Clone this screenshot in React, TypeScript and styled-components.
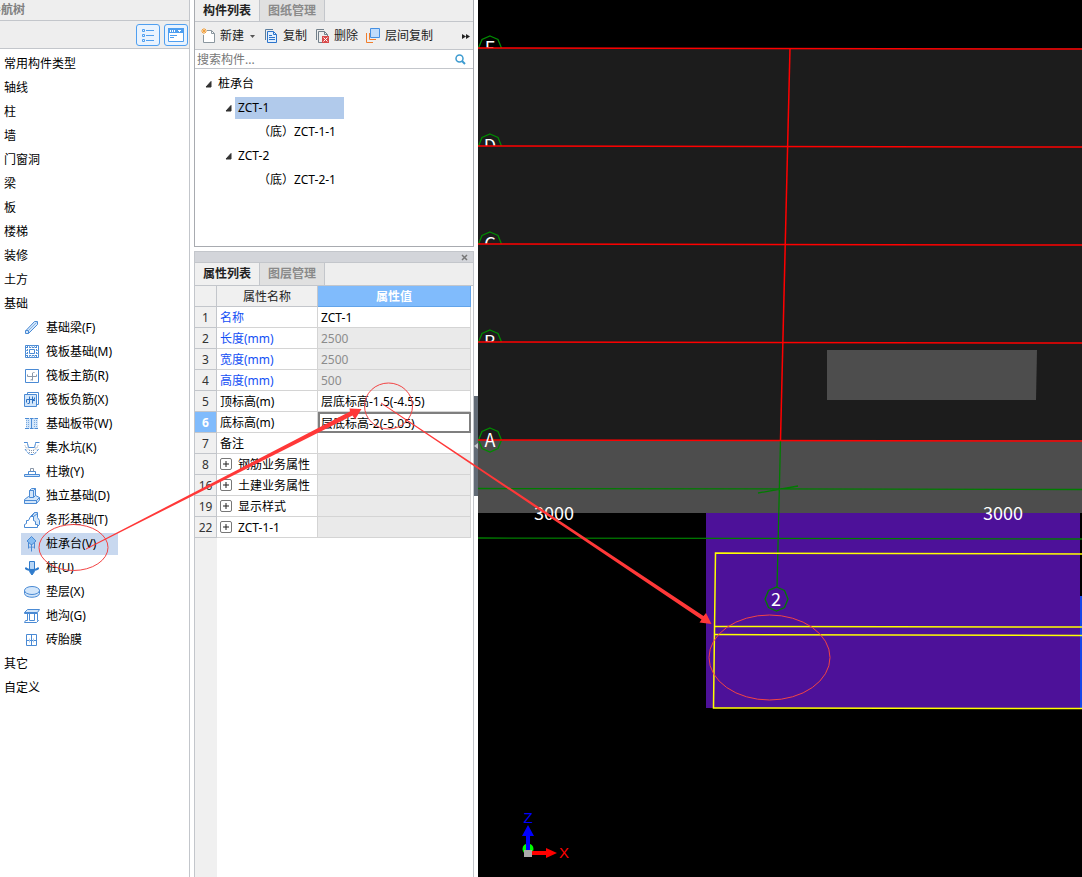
import React from "react";
import styled, { createGlobalStyle } from "styled-components";

const Global = createGlobalStyle`
  *, *::before, *::after { box-sizing: border-box; }
  body { margin: 0; background: #fff; }
  body, button, input, table {
    font-family: "Noto Sans", "Noto Sans CJK SC", sans-serif;
    font-size: 12px;
    line-height: 20px;
    color: #000;
  }
  button { border: 0; padding: 0; background: none; cursor: pointer; }
  svg { display: block; flex: none; }
`;

const line = "#c3c6cb";
const bar = "#eeeeee";

const Shell = styled.div`
  position: relative;
  display: flex;
  min-height: 100vh;
  overflow: hidden;
`;

/* ---------- navigation ---------- */
const Nav = styled.nav`
  width: 190px;
  flex: none;
  margin-right: 4px;
  border-right: 1px solid ${line};
`;
const NavTitle = styled.div`
  display: flex;
  justify-content: flex-end;
  width: 100%;
  height: 21px;
  padding-right: 164px;
  overflow: hidden;
  white-space: nowrap;
  background: ${bar};
  border-bottom: 1px solid ${line};
  color: #808080;
  font-weight: 700;
`;
const NavTools = styled.div`
  display: flex;
  justify-content: flex-end;
  align-items: center;
  gap: 4px;
  height: 28px;
  padding-right: 1px;
  background: ${bar};
  border-bottom: 1px solid ${line};
`;
const ViewButton = styled.button`
  display: grid;
  place-items: center;
  width: 24px;
  height: 22px;
  border: 1px solid #4f9ff0;
  border-radius: 3px;
  background: #e9f3fe;
`;
const NavList = styled.ul`
  list-style: none;
  margin: 0;
  padding: 3px 0;
`;
const NavItem = styled.li`
  display: flex;
  align-items: center;
  height: 24px;
`;
const NavButton = styled.button<{ $child?: boolean; $active?: boolean }>`
  display: flex;
  align-items: center;
  gap: 6px;
  height: 22px;
  min-width: ${(p) => (p.$child ? "97px" : "0")};
  margin-left: ${(p) => (p.$child ? "21px" : "4px")};
  padding-left: ${(p) => (p.$child ? "3px" : "0")};
  white-space: nowrap;
  background: ${(p) => (p.$active ? "#c8d8ef" : "transparent")};
`;

/* ---------- middle column ---------- */
const Middle = styled.div`
  display: flex;
  flex-direction: column;
  width: 280px;
  flex: none;
  gap: 4px;
`;
const Panel = styled.section<{ $grow?: boolean }>`
  display: flex;
  flex-direction: column;
  flex: ${(p) => (p.$grow ? "1" : "none")};
  height: ${(p) => (p.$grow ? "auto" : "247px")};
  border: 1px solid ${(p) => (p.$grow ? line : "#a8abb0")};
  border-top: 0;
  border-bottom-width: ${(p) => (p.$grow ? "0" : "1px")};
`;
const Tabs = styled.div<{ $tall?: boolean }>`
  display: flex;
  height: ${(p) => (p.$tall ? "23px" : "22px")};
  flex: none;
  background: ${bar};
  border-bottom: 1px solid ${line};
`;
const Tab = styled.button<{ $active?: boolean }>`
  width: 65px;
  border-right: 1px solid ${line};
  background: ${(p) => (p.$active ? "#f0f0f0" : "#e0e0e0")};
  color: ${(p) => (p.$active ? "#222" : "#8a8a8a")};
  font-weight: 700;
`;
const Toolbar = styled.div`
  display: flex;
  align-items: center;
  gap: 8px;
  height: 28px;
  padding: 1px 2px 0 6px;
  background: ${bar};
  border-bottom: 1px solid ${line};
`;
const ToolButton = styled.button`
  display: flex;
  align-items: center;
  gap: 4px;
  white-space: nowrap;
  color: #1c1c1c;
`;
const MoreButton = styled.button`
  margin-left: auto;
`;
const SearchBox = styled.label`
  display: flex;
  align-items: center;
  height: 19px;
  padding: 1px 7px 0 2px;
  border-bottom: 1px solid ${line};
`;
const SearchInput = styled.input`
  flex: 1;
  min-width: 0;
  height: 18px;
  padding: 0;
  border: 0;
  outline: 0;
  background: transparent;
  &::placeholder { color: #777; opacity: 1; }
`;
const Tree = styled.ul`
  list-style: none;
  margin: 0;
  padding: 3px 0;
`;
const TreeRow = styled.li<{ $level: number }>`
  display: flex;
  align-items: center;
  gap: 3px;
  height: 24px;
  padding-left: ${(p) => 10 + p.$level * 20}px;
`;
const TreeLabel = styled.button<{ $active?: boolean }>`
  height: 22px;
  min-width: ${(p) => (p.$active ? "109px" : "0")};
  padding: 0 3px;
  text-align: left;
  white-space: nowrap;
  background: ${(p) => (p.$active ? "#b1caeb" : "transparent")};
`;

const DockBar = styled.div`
  display: flex;
  justify-content: flex-end;
  align-items: center;
  height: 12px;
  padding-right: 5px;
  background: #d3d5da;
  border-top: 1px solid ${line};
  border-bottom: 1px solid ${line};
`;
const TableArea = styled.div`
  flex: 1;
  padding-right: 2px;
  background: linear-gradient(to right, #f0f0f0 22px, #fff 22px);
`;
const Table = styled.table`
  width: 100%;
  table-layout: fixed;
  border-collapse: separate;
  border-spacing: 0;
  line-height: 19px;
`;
const HeadCell = styled.th<{ $width?: string; $active?: boolean }>`
  width: ${(p) => p.$width ?? "auto"};
  height: 21px;
  padding: 1px 0 0;
  font-weight: ${(p) => (p.$active ? 700 : 400)};
  color: ${(p) => (p.$active ? "#fff" : "#222")};
  background: ${(p) => (p.$active ? "#80bbfc" : "#f0f0f0")};
  border-right: 1px solid ${(p) => (p.$active ? "#62a4ea" : line)};
  border-bottom: 1px solid ${(p) => (p.$active ? "#62a4ea" : line)};
`;
const RowNumber = styled.th<{ $active?: boolean }>`
  height: 21px;
  padding: 1px 0 0;
  text-align: center;
  font-weight: ${(p) => (p.$active ? 700 : 400)};
  color: ${(p) => (p.$active ? "#fff" : "#333")};
  background: ${(p) => (p.$active ? "#80bbfc" : "#f0f0f0")};
  border-right: 1px solid ${line};
  border-bottom: 1px solid ${line};
`;
const Cell = styled.td<{ $blue?: boolean; $shade?: boolean }>`
  height: 21px;
  padding: 1px 0 0 3px;
  white-space: nowrap;
  color: ${(p) => (p.$blue ? "#1450f5" : p.$shade ? "#8c8c8c" : "#000")};
  background: ${(p) => (p.$shade ? "#eaeaea" : "#fff")};
  border-right: 1px solid #d4d4d4;
  border-bottom: 1px solid #d4d4d4;
`;
const EditCell = styled.td`
  padding: 0;
  height: 21px;
`;
const CellInput = styled.input`
  display: block;
  width: 100%;
  height: 21px;
  padding: 0 1px;
  border: 2px solid #7f7f7f;
  outline: 0;
`;
const GroupLabel = styled.span`
  display: flex;
  align-items: center;
  gap: 6px;
  height: 19px;
`;
const Expand = styled.button`
  display: grid;
  place-items: center;
  width: 12px;
  height: 12px;
  margin-bottom: 2px;
  border: 1px solid #777;
  border-radius: 2px;
  background: #fff;
`;

/* ---------- splitter and drawing area ---------- */
const Splitter = styled.div`
  width: 4px;
  flex: none;
  padding-top: 396px;
`;
const SplitHandle = styled.button`
  display: flex;
  align-items: center;
  width: 4px;
  height: 100px;
  background: #626b76;
`;
const Viewport = styled.main`
  flex: 1;
  min-width: 0;
  background: #000;
  overflow: hidden;
`;
const Scene = styled.svg`
  width: 100%;
  height: 100%;
  font-family: "Noto Sans CJK SC", "Noto Sans", sans-serif;
  font-size: 18px;
`;
const AxisLabel = styled.text`
  font-family: "Liberation Sans", sans-serif;
  font-size: 15px;
`;
const Markup = styled.svg`
  position: absolute;
  left: 0;
  top: 0;
  width: 100%;
  height: 100%;
  pointer-events: none;
`;

/* ---------- icons ---------- */
const B = "#4a8ad4";
const L = "#d3e6fa";
const Icon = ({ children }: { children: React.ReactNode }) => (
  <svg width="16" height="16" viewBox="0 0 16 16" fill="none" stroke={B} aria-hidden="true">
    {children}
  </svg>
);

const icons: Record<string, React.ReactNode> = {
  beam: (
    <Icon>
      <path d="M1.5 11 10.5 1.5H13.5V4.5L4.5 13.5H1.5Z" fill={L} />
      <path d="M1.5 10.5H4.5V13.5" />
      <path d="M4.5 10.500 12.500 2.500" stroke="#84b2e4" />
    </Icon>
  ),
  raft: (
    <Icon>
      <path d="M1.500 1.500H14.500V13.500H1.500Z" />
      <path d="M5.500 5.500H10.500V9.500H5.500Z" />
      <path d="M2 3.500H14M2 11.500H14M3.500 2V13M12.500 2V13" strokeDasharray="2 1" />
      <path d="M5.500 1.500V3.500M8 1.500V3.500M10.500 1.500V3.500M5.500 11.500V13.500M8 11.500V13.500M10.500 11.500V13.500M1.500 6.500H3.500M1.500 9.500H3.500M12.500 6.500H14.500M12.500 9.500H14.500" stroke="#76a9e0" />
    </Icon>
  ),
  mainBar: (
    <Icon>
      <path d="M1.500 1.500H14.500V14.500H1.500Z" />
      <path d="M8.500 12.500V5L9.500 4.500H10.500M8.500 11.500 6.500 12M3.500 8.500H12.500M3.500 8.500V6.500M12.500 8.500V6.500" stroke="#8b98a8" />
    </Icon>
  ),
  negBar: (
    <Icon>
      <path d="M3.500 2V.5H14.500V12.500H13" />
      <path d="M.5 2.500H12.500V14.500H.5Z" fill={L} />
      <path d="M5.500 4.500V11.500M8.500 4.500V11.500M2.500 10.500V7.500H10.500V5.500M3.500 11.500H5M9 8.500H11" stroke="#2e72c2" />
    </Icon>
  ),
  strip: (
    <Icon>
      <path d="M2 2H14V13H2Z" fill={L} stroke="none" />
      <path d="M1 2.500H5M6 2.500H9.500M10.500 2.500H14M1 12.500H5M6 12.500H9.500M10.500 12.500H14M7.500 3V12" />
      <path d="M2.500 4V12M4.500 4V12M10.500 4V12M12.500 4V12" strokeDasharray="1 1" stroke="#7aa9de" />
    </Icon>
  ),
  sump: (
    <Icon>
      <path d="M0 2.500H3.500V3.500L4.500 7.500H10.500L11.500 3.500V2.500H15.500" />
      <path d="M1 5.500 3 9.500M3 7.500 6 10.500M5 10.500H11M14 5.500 12 9.500M12 7.500 9 10.500M5 12.500H10" stroke="#8a97a8" strokeDasharray="1 1" />
      <path d="M1 9 3.500 12.500 6 14.500H9.500L12 12.500 14.500 9" strokeDasharray="3 1" />
    </Icon>
  ),
  pier: (
    <Icon>
      <path d="M.5 10.500H15.500V12.500H.5Z" fill={L} />
      <path d="M4.500 10V7.500H11.500V10" />
      <path d="M6.500 7.500V4.500H9.500V7.500" stroke="#8a97a8" />
    </Icon>
  ),
  isolated: (
    <Icon>
      <path d="M.5 11.500 4.500 8.500H5.500V2.500L7.500 .5H11.500V7.500L15.500 9.500V12L12.500 15.500H.5Z" fill={L} />
      <path d="M5.500 2.500H9.500V9.500L11.500 7.500M9.500 2.500 11.500 .5M.5 12.500H12.500V15.500M12.500 12.500 15.500 9.500M5.500 8.500V9.500H9.500" />
    </Icon>
  ),
  stripFooting: (
    <Icon>
      <path d="M7.500 5 10.500 .5H13.500V5.500L15.500 8.500V12.500L13.500 14.500 9.500 9Z" fill={L} />
      <path d="M.5 15.500V12.500L2.500 11.500V8.500H4.500L6.500 4.500H9.500V8.500L11.500 9.500V12.500H13.500V15.500ZM6.500 4.500 10.500 .5M9.500 4.500 13.500 1.500" fill="#fff" />
    </Icon>
  ),
  cap: (
    <Icon>
      <path d="M7.500 .5 12 5 7.500 9 3 5Z" fill="#86bcf2" />
      <path d="M7.500 8V15.500M4.500 6.500V12.500M10.500 6.500V12.500M6 10.500V12M9 10.500V12" />
    </Icon>
  ),
  pile: (
    <Icon>
      <path d="M5.500 1.500H10.500V9.500H5.500Z" fill="#b8d6f6" stroke="#2f7bcc" />
      <path d="M2 7.500V8.500C4 10.500 12 10.500 14 8.500V7.500" stroke="#2f7bcc" strokeWidth="2" />
      <path d="M5.500 11.500H10.500L8 15Z" fill="#2f7bcc" stroke="#2f7bcc" />
    </Icon>
  ),
  cushion: (
    <Icon>
      <path d="M.5 6V9.500C1 14.500 15 14.500 15.500 9.500V6" fill={L} />
      <ellipse cx="8" cy="6.500" rx="7.500" ry="4" fill={L} />
    </Icon>
  ),
  trench: (
    <Icon>
      <path d="M.5 4.500 3.500 1.500H15.500L13.500 4.500V5.500H.5Z" fill={L} />
      <path d="M.5 4.500H13M3.500 5.500V12.500M5.500 5.500V12.500M10.500 5.500V12.500M13.500 5.500V12.500M3.500 12.500H1.500L.5 14.500H12.500L14.500 12.500H13.500M5.500 12.500H10.500" />
    </Icon>
  ),
  brick: (
    <Icon>
      <path d="M2.500 2.500H12.500V13.500H2.500ZM7.500 2.500V13.500M2.500 8.500H12.500" />
      <path d="M5.500 6.500V10.500M9.500 6.500V10.500" stroke="#a9caee" />
    </Icon>
  ),
};

const NewIcon = () => (
  <svg width="15" height="16" viewBox="0 0 15 16" fill="none" aria-hidden="true">
    <path d="M6 2.500H10.500L13.500 5.500V14.500H2.500V7" fill="#fff" />
    <path d="M6 2.500H10.500L13.500 5.500V14.500H2.500V7M10.500 2.500V5.500H13.500" stroke="#8b979f" />
    <path d="M3 0V6M0 3H6M1 1 5 5M5 1 1 5" stroke="#f3a13c" />
  </svg>
);
const CopyIcon = () => (
  <svg width="15" height="16" viewBox="0 0 15 16" fill="none" aria-hidden="true">
    <path d="M1.500 12V1.500H9" stroke="#5b7d9d" />
    <path d="M3.500 3.500H9.500L12.500 6.500V14.500H3.500Z" fill="#e2effd" stroke="#2c74cb" />
    <path d="M9.500 3.500V6.500H12.500M5 7.500H8M5 9.500H11M5 11.500H11" stroke="#2c74cb" />
  </svg>
);
const DeleteIcon = () => (
  <svg width="15" height="16" viewBox="0 0 15 16" fill="none" aria-hidden="true">
    <path d="M1.500 12V1.500H9M7 14.500H3.500V3.500H9.500L12.500 6.500V8M9.500 3.500V6.500H12.500" stroke="#72808a" />
    <path d="M7 8H14V15H7Z" fill="#d94b4b" />
    <path d="M8.500 9.500 12.500 13.500M12.500 9.500 8.500 13.500" stroke="#fff" />
  </svg>
);
const LayerIcon = () => (
  <svg width="15" height="16" viewBox="0 0 15 16" fill="none" aria-hidden="true">
    <path d="M.5 5V14.500H7M3.500 5V11.500H10" stroke="#f07d2c" />
    <path d="M4.500 .5H13.500V9.500H4.500Z" fill="#c0dcfb" stroke="#4590e2" />
  </svg>
);
const Caret = () => (
  <svg width="7" height="7" viewBox="0 0 7 7" aria-hidden="true">
    <path d="M6 .5V6H1Z" fill="#333" stroke="#333" strokeWidth="1" strokeLinejoin="round" />
  </svg>
);

const groups = ["常用构件类型", "轴线", "柱", "墙", "门窗洞", "梁", "板", "楼梯", "装修", "土方", "基础"];
const foundations: [string, string][] = [
  ["beam", "基础梁(F)"],
  ["raft", "筏板基础(M)"],
  ["mainBar", "筏板主筋(R)"],
  ["negBar", "筏板负筋(X)"],
  ["strip", "基础板带(W)"],
  ["sump", "集水坑(K)"],
  ["pier", "柱墩(Y)"],
  ["isolated", "独立基础(D)"],
  ["stripFooting", "条形基础(T)"],
  ["cap", "桩承台(V)"],
  ["pile", "桩(U)"],
  ["cushion", "垫层(X)"],
  ["trench", "地沟(G)"],
  ["brick", "砖胎膜"],
];

type Prop = { no: number; name: string; value?: string; blue?: boolean; shade?: boolean; group?: boolean; edit?: boolean };
const props: Prop[] = [
  { no: 1, name: "名称", value: "ZCT-1", blue: true },
  { no: 2, name: "长度(mm)", value: "2500", blue: true, shade: true },
  { no: 3, name: "宽度(mm)", value: "2500", blue: true, shade: true },
  { no: 4, name: "高度(mm)", value: "500", blue: true, shade: true },
  { no: 5, name: "顶标高(m)", value: "层底标高-1.5(-4.55)" },
  { no: 6, name: "底标高(m)", value: "层底标高-2(-5.05)", edit: true },
  { no: 7, name: "备注" },
  { no: 8, name: "钢筋业务属性", shade: true, group: true },
  { no: 16, name: "土建业务属性", shade: true, group: true },
  { no: 19, name: "显示样式", shade: true, group: true },
  { no: 22, name: "ZCT-1-1", shade: true, group: true },
];

const bubble = "M0 -12 8 -8.5 11.5 0 8 8.5 0 12 -8 8.5 -11.5 0 -8 -8.5Z";
const axes: [string, number][] = [["E", 48], ["D", 146], ["C", 244], ["B", 342]];

const Drawing = () => (
  <Scene aria-label="三维视图">
    <defs>
      {axes.map(([n, y]) => (
        <clipPath id={`above-${n}`} key={n}>
          <rect x="0" y={y - 20} width="40" height="20" />
        </clipPath>
      ))}
    </defs>
    <rect y="48" width="100%" height="392" fill="#1c1c1c" />
    <rect y="440" width="100%" height="73" fill="#4d4d4d" />
    <path d="M349 350H559L558 400H349Z" fill="#4d4d4d" />
    <rect x="228" y="513" width="374" height="195" fill="#4d1199" />
    <path d="M603 596V708" stroke="#1747e8" strokeWidth="2" />
    <path d="M0 488.5 604 489.5M0 538 604 539M302.500 440 299 588M280 493 320 486" stroke="#007c00" strokeWidth="1.300" fill="none" />
    <g stroke="#ffff00" strokeWidth="1.500" fill="none">
      <path d="M604 554 237.500 553 235.500 708 604 708.500" />
      <path d="M237 626.500 604 627M237 634.500 604 635.500" />
    </g>
    {axes.map(([n, y]) => (
      <g key={n} clipPath={`url(#above-${n})`}>
        <path d={bubble} transform={`translate(12 ${y})`} fill="none" stroke="#008a00" strokeWidth="1.300" />
        <text x="12" y={y + 7} textAnchor="middle" fill="#fff">{n}</text>
      </g>
    ))}
    {axes.map(([n, y]) => (
      <path key={n} d={`M0 ${y}L604 ${y + 1}`} stroke="#f00" strokeWidth="1.500" />
    ))}
    <path d="M312 48 302.500 440" stroke="#f00" strokeWidth="1.500" />
    <path d={bubble} transform="translate(12 440)" fill="none" stroke="#008a00" strokeWidth="1.300" />
    <path d="M0 440 604 441" stroke="#f00" strokeWidth="1.500" />
    <text x="12" y="447" textAnchor="middle" fill="#fff">A</text>
    <path d={bubble} transform="translate(298.500 599)" fill="none" stroke="#007c00" strokeWidth="1.300" />
    <text x="298" y="606" textAnchor="middle" fill="#fff">2</text>
    <text x="56" y="520" fill="#fff">3000</text>
    <text x="505" y="520" fill="#fff">3000</text>
    <circle cx="50" cy="849" r="5.500" fill="#0f0" />
    <path d="M48 850V836H44L50 825 56 836H52V850Z" fill="#00f" />
    <path d="M54 851H68V848L79 853 68 858V855H54Z" fill="#f00" />
    <rect x="46" y="850" width="8" height="7" fill="#aaa" />
    <AxisLabel x="50" y="823" textAnchor="middle" fill="#00f">Z</AxisLabel>
    <AxisLabel x="86" y="858" textAnchor="middle" fill="#f00">X</AxisLabel>
  </Scene>
);

export default function App() {
  return (
    <Shell>
      <Global />
      <Nav aria-label="导航树">
        <NavTitle>导航树</NavTitle>
        <NavTools>
          <ViewButton aria-label="列表">
            <svg width="14" height="16" viewBox="0 0 14 16" fill="none" stroke="#4f9ff0">
              <path d="M1.500 2.500H3.500V4.500H1.500ZM1.500 7.500H3.500V9.500H1.500ZM1.500 12.500H3.500V14.500H1.500ZM5 3.500H13M5 8.500H13M5 13.500H13" />
            </svg>
          </ViewButton>
          <ViewButton aria-label="面板">
            <svg width="16" height="14" viewBox="0 0 16 14" fill="none">
              <path d="M.5 .5H15.500V13.500H.5Z" fill="#fff" stroke="#4f9ff0" />
              <path d="M0 0H16V5H0Z" fill="#4f9ff0" />
              <path d="M2.500 2V4M4.500 2V4M6.500 2V4M10 2.500H13" stroke="#fff" />
              <path d="M11 3H12V4H11Z" fill="#fff" />
              <path d="M2 7.500H9M2 9.500H6" stroke="#4f9ff0" />
            </svg>
          </ViewButton>
        </NavTools>
        <NavList>
          {groups.map((g) => (
            <NavItem key={g}><NavButton>{g}</NavButton></NavItem>
          ))}
          {foundations.map(([icon, label]) => (
            <NavItem key={label}>
              <NavButton $child $active={icon === "cap"}>{icons[icon]}{label}</NavButton>
            </NavItem>
          ))}
          <NavItem><NavButton>其它</NavButton></NavItem>
          <NavItem><NavButton>自定义</NavButton></NavItem>
        </NavList>
      </Nav>

      <Middle>
        <Panel>
          <Tabs>
            <Tab $active>构件列表</Tab>
            <Tab>图纸管理</Tab>
          </Tabs>
          <Toolbar>
            <ToolButton>
              <NewIcon />新建
              <svg width="8" height="5" viewBox="0 0 8 5"><path d="M2 1H7L4.500 4Z" fill="#555" /></svg>
            </ToolButton>
            <ToolButton><CopyIcon />复制</ToolButton>
            <ToolButton><DeleteIcon />删除</ToolButton>
            <ToolButton><LayerIcon />层间复制</ToolButton>
            <MoreButton aria-label="更多">
              <svg width="9" height="7" viewBox="0 0 9 7"><path d="M0 1 4 3.500 0 6ZM4 1 8 3.500 4 6Z" fill="#222" /></svg>
            </MoreButton>
          </Toolbar>
          <SearchBox>
            <SearchInput placeholder="搜索构件..." aria-label="搜索构件" />
            <svg width="11" height="11" viewBox="0 0 11 11" fill="none" stroke="#3d9bd0">
              <circle cx="4.500" cy="4.500" r="3.500" strokeWidth="1.500" />
              <path d="M7 7 10 10" strokeWidth="2" />
            </svg>
          </SearchBox>
          <Tree>
            <TreeRow $level={0}><Caret /><TreeLabel>桩承台</TreeLabel></TreeRow>
            <TreeRow $level={1}><Caret /><TreeLabel $active>ZCT-1</TreeLabel></TreeRow>
            <TreeRow $level={2.5}><TreeLabel>（底）ZCT-1-1</TreeLabel></TreeRow>
            <TreeRow $level={1}><Caret /><TreeLabel>ZCT-2</TreeLabel></TreeRow>
            <TreeRow $level={2.5}><TreeLabel>（底）ZCT-2-1</TreeLabel></TreeRow>
          </Tree>
        </Panel>

        <Panel $grow>
          <DockBar>
            <button aria-label="关闭">
              <svg width="7" height="7" viewBox="0 0 7 7" stroke="#777" strokeWidth="1.500"><path d="M1 1 6 6M6 1 1 6" /></svg>
            </button>
          </DockBar>
          <Tabs $tall>
            <Tab $active>属性列表</Tab>
            <Tab>图层管理</Tab>
          </Tabs>
          <TableArea>
            <Table>
              <thead>
                <tr>
                  <HeadCell $width="22px" aria-label="序号" />
                  <HeadCell $width="101px">属性名称</HeadCell>
                  <HeadCell $active>属性值</HeadCell>
                </tr>
              </thead>
              <tbody>
                {props.map((p) => (
                  <tr key={p.no}>
                    <RowNumber scope="row" $active={p.edit}>{p.no}</RowNumber>
                    <Cell $blue={p.blue}>
                      {p.group ? (
                        <GroupLabel>
                          <Expand aria-label={`展开${p.name}`}>
                            <svg width="6" height="6" viewBox="0 0 6 6"><path d="M0 3H6M3 0V6" stroke="#222" /></svg>
                          </Expand>
                          {p.name}
                        </GroupLabel>
                      ) : p.name}
                    </Cell>
                    {p.edit ? (
                      <EditCell><CellInput aria-label={p.name} defaultValue={p.value} /></EditCell>
                    ) : (
                      <Cell $shade={p.shade}>{p.value}</Cell>
                    )}
                  </tr>
                ))}
              </tbody>
            </Table>
          </TableArea>
        </Panel>
      </Middle>

      <Splitter>
        <SplitHandle aria-label="收起面板">
          <svg width="4" height="6" viewBox="0 0 4 6"><path d="M4 0V6L0 3Z" fill="#c4c8cc" /></svg>
        </SplitHandle>
      </Splitter>

      <Viewport><Drawing /></Viewport>

      <Markup aria-hidden="true">
        <g fill="none" stroke="#f24444">
          <ellipse cx="73.500" cy="547.500" rx="34.500" ry="23" />
          <ellipse cx="388.500" cy="406" rx="24" ry="23" />
          <ellipse cx="769.500" cy="657.500" rx="60.500" ry="42.500" />
        </g>
        <g fill="#ff3838">
          <path d="M86 548.500 350 411.500 349.500 408.500 361.500 409 355 419.500 352.500 415.500 86 549.500Z" />
          <path d="M381 402.500 703.500 616 706 613 711.500 624 699.500 622.500 701.500 619.500 381 403.500Z" />
        </g>
      </Markup>
    </Shell>
  );
}
